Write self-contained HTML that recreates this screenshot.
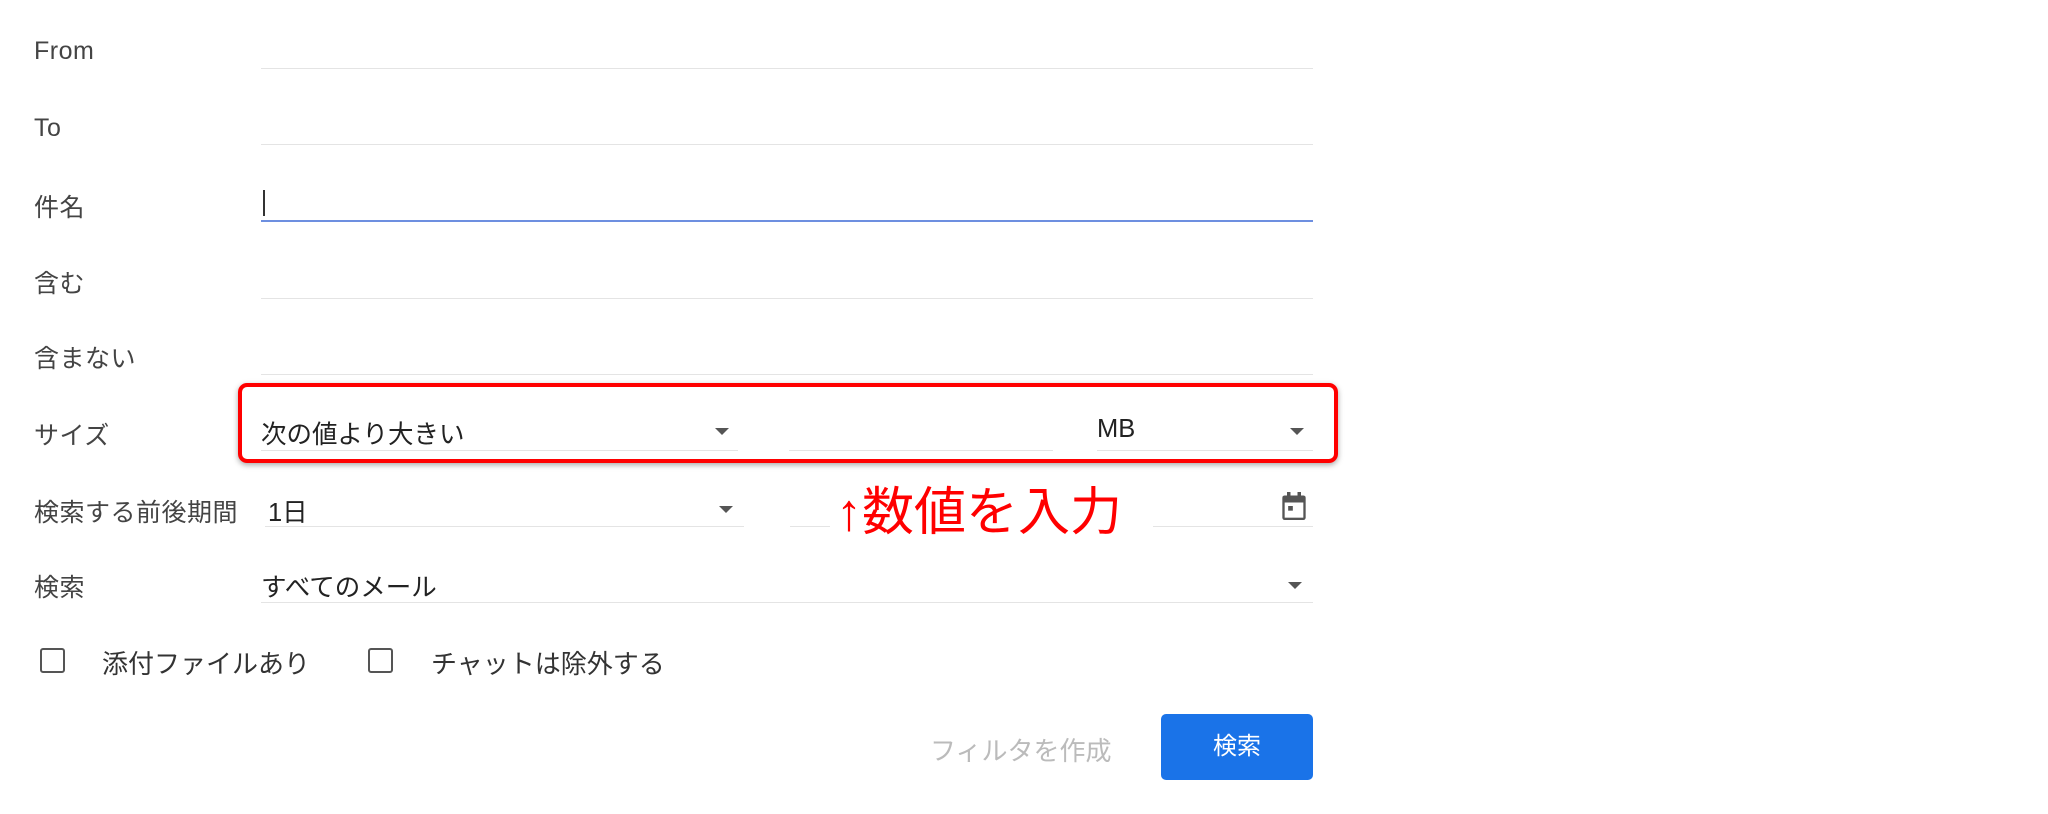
<!DOCTYPE html>
<html><head><meta charset="utf-8"><style>
body{margin:0;width:2048px;height:814px;background:#fff;position:relative;overflow:hidden;font-family:"Liberation Sans","Noto Sans CJK JP",sans-serif;color:#222}
.a{position:absolute;white-space:nowrap}
.lab{font-size:25px;color:#444;left:34px;letter-spacing:.5px}
.ln{position:absolute;height:1px;background:#e4e4e4}
.arr{position:absolute;width:0;height:0;border-left:7px solid transparent;border-right:7px solid transparent;border-top:7px solid #555}
.val{font-size:25.5px;color:#222}
.cb{position:absolute;width:21px;height:21px;border:2.5px solid #555;border-radius:3px}
</style></head><body>
<div class="a lab" style="top:37px">From</div><div class="ln" style="left:261px;width:1052px;top:68px"></div>
<div class="a lab" style="top:114px">To</div><div class="ln" style="left:261px;width:1052px;top:144px"></div>
<div class="a lab" style="top:188px">件名</div><div class="ln" style="left:261px;width:1052px;top:220px;height:2px;background:#6d8fe0"></div>
<div style="position:absolute;left:263px;top:190px;width:2px;height:26px;background:#333"></div>
<div class="a lab" style="top:264px">含む</div><div class="ln" style="left:261px;width:1052px;top:298px"></div>
<div class="a lab" style="top:339px">含まない</div><div class="ln" style="left:261px;width:1052px;top:374px"></div>
<div class="a lab" style="top:416px">サイズ</div>
<div class="a val" style="left:261px;top:414px">次の値より大きい</div><div class="arr" style="left:715px;top:428px"></div><div class="ln" style="left:261px;width:477px;top:450px"></div>
<div class="ln" style="left:789px;width:264px;top:450px"></div>
<div class="a val" style="left:1097px;top:415px">MB</div><div class="arr" style="left:1290px;top:428px"></div><div class="ln" style="left:1097px;width:216px;top:450px"></div>
<div style="position:absolute;left:238px;top:383px;width:1092px;height:72px;border:4px solid #f00;border-radius:9px;box-shadow:0 2px 6px rgba(0,0,0,.35)"></div>
<div class="a lab" style="top:493px">検索する前後期間</div>
<div class="a val" style="left:268px;top:492px">1日</div><div class="arr" style="left:719px;top:506px"></div><div class="ln" style="left:265px;width:479px;top:526px"></div>
<div class="ln" style="left:790px;width:40px;top:526px"></div>
<div class="a" style="left:836px;top:470px;font-size:52px;color:#f00">↑数値を入力</div>
<div class="ln" style="left:1153px;width:160px;top:526px"></div>
<svg class="a" style="left:1280px;top:490px" width="28" height="32" viewBox="0 0 24 26"><rect x="2" y="4" width="20" height="21" rx="2" fill="#555"/><rect x="4" y="10" width="16" height="13" fill="#fff"/><rect x="6" y="1" width="3" height="5" fill="#555"/><rect x="15" y="1" width="3" height="5" fill="#555"/><rect x="7" y="13" width="4" height="4" fill="#555"/></svg>
<div class="a lab" style="top:568px">検索</div>
<div class="a val" style="left:261px;top:567px">すべてのメール</div><div class="arr" style="left:1288px;top:582px"></div><div class="ln" style="left:261px;width:1052px;top:602px"></div>
<div class="cb" style="left:40px;top:648px"></div><div class="a" style="left:102px;top:644px;font-size:26px;color:#333">添付ファイルあり</div>
<div class="cb" style="left:368px;top:648px"></div><div class="a" style="left:431px;top:644px;font-size:26px;color:#333">チャットは除外する</div>
<div class="a" style="left:930px;top:731px;font-size:26px;color:#bbb">フィルタを作成</div>
<div style="position:absolute;left:1161px;top:714px;width:152px;height:66px;background:#1a73e8;border-radius:5px;color:#fff;font-size:24px;text-align:center;line-height:66px">検索</div>
</body></html>
